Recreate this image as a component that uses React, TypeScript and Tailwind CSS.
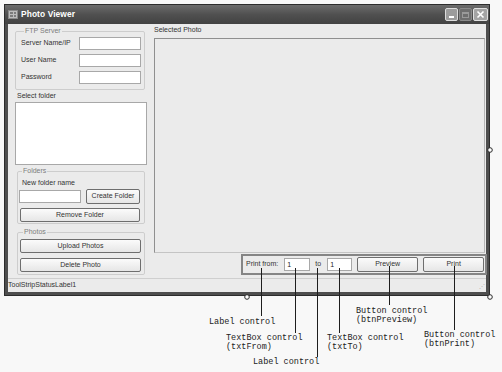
import React from "react"

const ui = "font-['Liberation_Sans',Arial,sans-serif]"

function TextBox({ w, value }: { w: string; value?: string }) {
  return (
    <div className={`${w} h-[13px] bg-white border border-[#a8a8a8] text-[7px] leading-[11px] pl-[2px] text-[#222]`}>
      {value}
    </div>
  )
}

function Button({ w, h = "h-[15px]", children }: { w: string; h?: string; children: React.ReactNode }) {
  return (
    <div
      className={`${w} ${h} flex items-center justify-center rounded-[2px] border border-[#6e6e6e] bg-gradient-to-b from-[#fbfbfb] to-[#e6e6e6] text-[7px] text-[#333]`}
    >
      {children}
    </div>
  )
}

function Group({ title, className, children }: { title: string; className: string; children: React.ReactNode }) {
  return (
    <fieldset className={`border border-[#cdcdcd] rounded-[2px] ${className}`}>
      <legend className="ml-[3px] px-[1px] text-[7px] leading-[10px] text-[#7d7d7d]">{title}</legend>
      {children}
    </fieldset>
  )
}

function FormRow({ label }: { label: string }) {
  return (
    <div className="flex items-center h-[13px]">
      <span className="w-[58px] text-[7px] text-[#333]">{label}</span>
      <TextBox w="w-[62px]" />
    </div>
  )
}

function TitleBar() {
  return (
    <div className="h-[19px] flex items-center bg-gradient-to-b from-[#6c6c6c] via-[#505050] to-[#424242]">
      <div className="ml-[3px] w-[10px] h-[9px] bg-[#bdbdbd] border border-[#8a8a8a] grid grid-cols-2 gap-[1px] p-[1px]">
        <div className="bg-[#7c7c7c]" />
        <div className="bg-[#7c7c7c]" />
        <div className="bg-[#7c7c7c]" />
        <div className="bg-[#7c7c7c]" />
      </div>
      <span className="ml-[3px] text-[8.4px] font-bold text-white tracking-[0.1px]">Photo Viewer</span>
      <div className="ml-auto mr-[1px] flex gap-[1px]">
        <div className="w-[13px] h-[13px] rounded-[2px] border border-[#dcdcdc] bg-[#9c9c9c] flex items-end justify-center pb-[2px]">
          <div className="w-[5px] h-[2px] bg-white" />
        </div>
        <div className="w-[13px] h-[13px] rounded-[2px] border border-[#8a8a8a] bg-[#6e6e6e] flex items-center justify-center">
          <div className="w-[7px] h-[6px] border border-[#9a9a9a] border-t-2" />
        </div>
        <div className="w-[15px] h-[13px] rounded-[2px] border border-[#e0e0e0] bg-[#a4a4a4] flex items-center justify-center">
          <svg width="9" height="9" viewBox="0 0 9 9">
            <path d="M1.5 1.5 L7.5 7.5 M7.5 1.5 L1.5 7.5" stroke="white" strokeWidth="1.6" />
          </svg>
        </div>
      </div>
    </div>
  )
}

function LeftColumn() {
  return (
    <div className="ml-[7px] w-[132px] flex flex-col">
      <Group title="FTP Server" className="mt-[2px] w-[130px] pl-[5px] pb-[5px]">
        <div className="flex flex-col gap-[4px] mt-[1px]">
          <FormRow label="Server Name/IP" />
          <FormRow label="User Name" />
          <FormRow label="Password" />
        </div>
      </Group>
      <div className="mt-[1px] ml-[2px] text-[7px] leading-[10px] text-[#333]">Select folder</div>
      <div className="mt-[1px] w-[132px] h-[63px] bg-white border border-[#a8a8a8]" />
      <Group title="Folders" className="mt-[1px] ml-[2px] w-[128px] pl-[1px] pb-[1px]">
        <div className="mt-[2px] ml-[3px] text-[7px] leading-[10px] text-[#333]">New folder name</div>
        <div className="mt-[1px] flex items-center h-[15px]">
          <TextBox w="w-[62px]" />
          <div className="ml-[5px]">
            <Button w="w-[54px]">Create Folder</Button>
          </div>
        </div>
        <div className="mt-[4px] ml-[1px]">
          <Button w="w-[120px]" h="h-[14px]">Remove Folder</Button>
        </div>
      </Group>
      <Group title="Photos" className="mt-[3px] ml-[2px] w-[128px] pl-[2px] pb-[2px]">
        <div className="mt-[2px]">
          <Button w="w-[121px]" h="h-[14px]">Upload Photos</Button>
        </div>
        <div className="mt-[5px]">
          <Button w="w-[121px]" h="h-[14px]">Delete Photo</Button>
        </div>
      </Group>
    </div>
  )
}

function RightColumn() {
  return (
    <div className="ml-[7px] mr-[1px] flex-1 flex flex-col">
      <div className="mt-[1px] text-[7px] leading-[10px] text-[#333]">Selected Photo</div>
      <div className="mt-[3px] w-[331px] h-[215px] border border-[#8f8f8f] border-r-[#b5b5b5] border-b-[#c4c4c4]" />
      <div className="mt-[1px] ml-auto mr-[-2px] w-[246px] h-[21px] border-2 border-[#858585] flex items-center">
        <span className="ml-[3px] text-[7px] text-[#333]">Print from:</span>
        <div className="ml-[6px]">
          <TextBox w="w-[26px]" value="1" />
        </div>
        <span className="ml-[5px] text-[7px] text-[#333]">to</span>
        <div className="ml-[6px]">
          <TextBox w="w-[25px]" value="1" />
        </div>
        <div className="ml-[5px]">
          <Button w="w-[61px]">Preview</Button>
        </div>
        <div className="ml-[5px]">
          <Button w="w-[61px]">Print</Button>
        </div>
      </div>
    </div>
  )
}

function Callouts() {
  const lines = [
    [261, 268, 316],
    [295, 268, 333],
    [317, 268, 357],
    [339, 268, 333],
    [389, 266, 305],
    [454, 266, 330],
  ]
  const handles = [
    [247, 297],
    [490, 297],
    [490, 150],
  ]
  const notes = [
    { x: 209, y: 318, text: ["Label control"] },
    { x: 226, y: 334, text: ["TextBox control", "(txtFrom)"] },
    { x: 253, y: 358, text: ["Label control"] },
    { x: 327, y: 334, text: ["TextBox control", "(txtTo)"] },
    { x: 356, y: 307, text: ["Button control", "(btnPreview)"] },
    { x: 424, y: 331, text: ["Button control", "(btnPrint)"] },
  ]
  return (
    <>
      <svg className="absolute left-0 top-0" width="502" height="372">
        {lines.map(([x, y1, y2], i) => (
          <line key={i} x1={x + 0.5} y1={y1} x2={x + 0.5} y2={y2} stroke="#1e1e1e" strokeWidth="1" />
        ))}
        {handles.map(([x, y], i) => (
          <circle key={i} cx={x} cy={y} r="2.3" fill="white" stroke="#2a2a2a" strokeWidth="1" />
        ))}
      </svg>
      {notes.map((n, i) => (
        <div
          key={i}
          className="absolute font-['Liberation_Mono','DejaVu_Sans_Mono',monospace] text-[8.5px] leading-[9px] text-[#222]"
          style={{ left: n.x, top: n.y }}
        >
          {n.text.map((t) => (
            <div key={t}>{t}</div>
          ))}
        </div>
      ))}
    </>
  )
}

export default function App() {
  return (
    <div className={`relative w-[502px] h-[372px] bg-[#f8f8f8] overflow-hidden ${ui}`}>
      <div className="pt-[4px] pl-[4px]">
        <div className="w-[486px] h-[292px] border border-[#2c2c2c] bg-[#4e4e4e] flex flex-col">
          <TitleBar />
          <div className="flex-1 mx-[3px] mb-[3px] bg-[#ebebeb] flex flex-col">
            <div className="flex-1 flex">
              <LeftColumn />
              <RightColumn />
            </div>
            <div className="h-[14px] border-t border-[#cfcfcf] flex items-center relative">
              <span className="ml-[0px] text-[7px] text-[#333]">ToolStripStatusLabel1</span>
              <span className="ml-auto mr-[2px] text-[6px] leading-none text-[#b0b0b0] tracking-[-1px]">⋰</span>
            </div>
          </div>
        </div>
      </div>
      <Callouts />
    </div>
  )
}
